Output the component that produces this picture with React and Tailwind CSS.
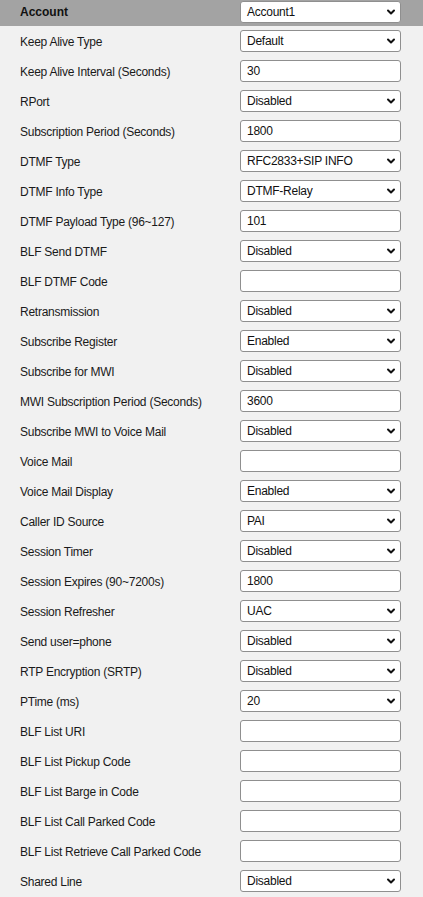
import React from "react";

const rows = [
  ["Keep Alive Type", "s", "Default"],
  ["Keep Alive Interval (Seconds)", "i", "30"],
  ["RPort", "s", "Disabled"],
  ["Subscription Period (Seconds)", "i", "1800"],
  ["DTMF Type", "s", "RFC2833+SIP INFO"],
  ["DTMF Info Type", "s", "DTMF-Relay"],
  ["DTMF Payload Type (96~127)", "i", "101"],
  ["BLF Send DTMF", "s", "Disabled"],
  ["BLF DTMF Code", "i", ""],
  ["Retransmission", "s", "Disabled"],
  ["Subscribe Register", "s", "Enabled"],
  ["Subscribe for MWI", "s", "Disabled"],
  ["MWI Subscription Period (Seconds)", "i", "3600"],
  ["Subscribe MWI to Voice Mail", "s", "Disabled"],
  ["Voice Mail", "i", ""],
  ["Voice Mail Display", "s", "Enabled"],
  ["Caller ID Source", "s", "PAI"],
  ["Session Timer", "s", "Disabled"],
  ["Session Expires (90~7200s)", "i", "1800"],
  ["Session Refresher", "s", "UAC"],
  ["Send user=phone", "s", "Disabled"],
  ["RTP Encryption (SRTP)", "s", "Disabled"],
  ["PTime (ms)", "s", "20"],
  ["BLF List URI", "i", ""],
  ["BLF List Pickup Code", "i", ""],
  ["BLF List Barge in Code", "i", ""],
  ["BLF List Call Parked Code", "i", ""],
  ["BLF List Retrieve Call Parked Code", "i", ""],
  ["Shared Line", "s", "Disabled"],
];

function Chevron() {
  return (
    <svg width="8" height="5" viewBox="0 0 8 5" className="absolute right-[5px] top-1/2 -translate-y-1/2 overflow-visible">
      <path d="M1 1 L4 4 L7 1" fill="none" stroke="#111" strokeWidth="2" strokeLinecap="round" strokeLinejoin="round" />
    </svg>
  );
}

function Select({ value }) {
  return (
    <div className="relative w-[161px] h-[22px] bg-white border border-[#8f8f8f] rounded-[3px] flex items-center pl-[6px] text-[12px] tracking-[-0.25px] text-[#111]">
      <span>{value}</span>
      <Chevron />
    </div>
  );
}

function Input({ value }) {
  return (
    <div className="w-[161px] h-[22px] bg-white border border-[#8f8f8f] rounded-[3px] flex items-center pl-[6px] text-[12px] tracking-[-0.25px] text-[#111]">
      <span>{value}</span>
    </div>
  );
}

export default function App() {
  return (
    <div
      className="w-[423px] min-h-[897px] bg-[#f1f1f1]"
      style={{ fontFamily: '"Liberation Sans", Arial, sans-serif' }}
    >
      <div className="h-[26px] bg-[#a3a3a3] flex items-start pt-[1px]">
        <div className="w-[240px] pl-[20px] h-[21px] flex items-center text-[12px] font-bold text-[#111]">Account</div>
        <Select value="Account1" />
      </div>
      {rows.map(([label, type, value]) => (
        <div key={label} className="h-[30px] flex items-center">
          <div className="w-[240px] pl-[20px] pt-[1px] text-[12px] tracking-[-0.25px] text-[#1a1a1a]">{label}</div>
          {type === "s" ? <Select value={value} /> : <Input value={value} />}
        </div>
      ))}
    </div>
  );
}
